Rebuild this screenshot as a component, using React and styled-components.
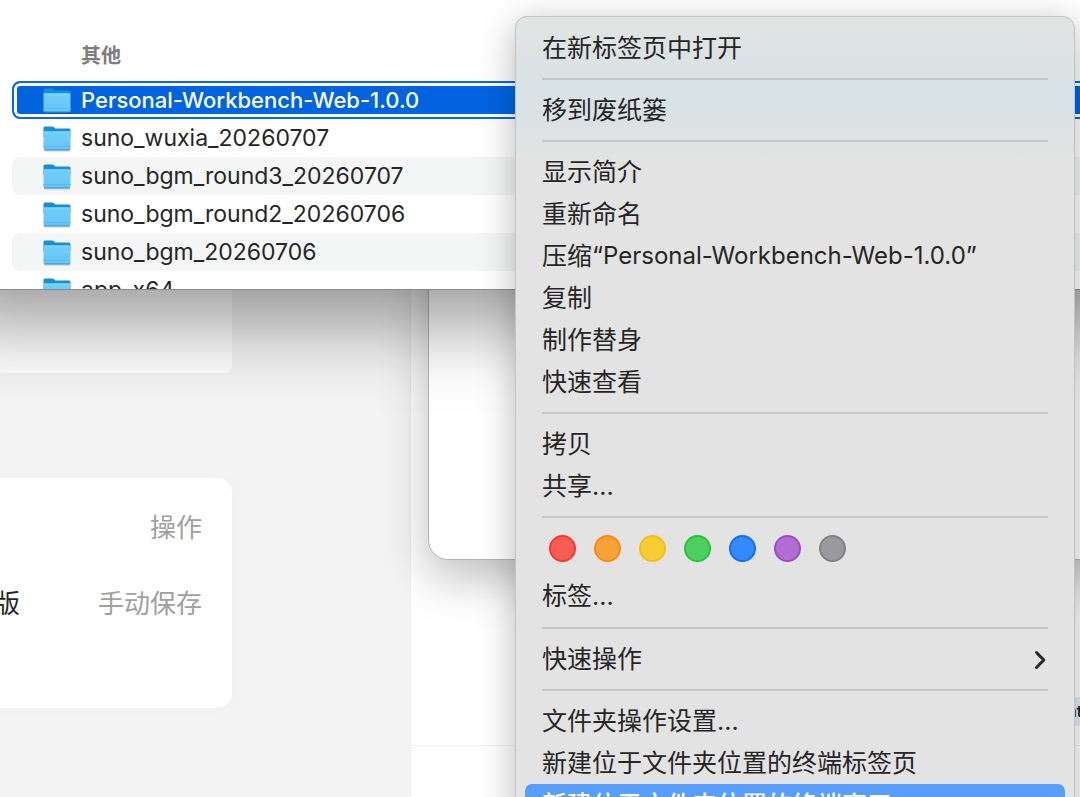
import React from "react";
import styled, { createGlobalStyle, css } from "styled-components";

const GlobalStyle = createGlobalStyle`
  * {
    box-sizing: border-box;
  }
  body {
    margin: 0;
    background-color: #f4f4f4;
    color: #262626;
    font-family: Inter, "Noto Sans CJK SC", sans-serif;
  }
  button {
    border: none;
    background: none;
    padding: 0;
    margin: 0;
    font: inherit;
    color: inherit;
    text-align: left;
  }
`;

const DesktopStyles = styled.main`
  position: relative;
  height: 100vh;
  overflow: hidden;
`;

/* web page behind the windows */
const PageStyles = styled.div`
  display: grid;
  grid-template-columns: 411px 1fr;
  min-height: 100vh;
`;

const Sidebar = styled.aside`
  display: flex;
  flex-direction: column;
  gap: 105px;
  padding-right: 178px;
  border-right: 1px solid #f0f0f0;
  background-color: #f4f4f4;
`;

const EmptyCard = styled.section`
  height: 373px;
  border-radius: 0 0 8px 0;
  background-color: #fff;
`;

const TableCard = styled.section`
  margin-left: -40px;
  padding: 10px 30px 68px 34px;
  border-radius: 15px;
  background-color: #fff;
  box-shadow: 0 0 20px rgba(0, 0, 0, 0.03);
`;

const SaveTable = styled.table`
  width: 100%;
  border-collapse: collapse;
  font-family: "Noto Sans CJK SC", sans-serif;
  font-size: 26px;
  line-height: 38px;
  th,
  td {
    height: 76px;
    padding: 0;
    font-weight: 400;
    text-align: left;
  }
  th:last-child,
  td:last-child {
    color: #a0a0a0;
    text-align: right;
  }
`;

const Content = styled.section`
  display: flex;
  flex-direction: column;
  background-color: #fff;
`;

const ContentHead = styled.div`
  display: flex;
  align-items: flex-end;
  justify-content: flex-end;
  height: 746px;
  padding-bottom: 19px;
  border-bottom: 1px solid #f0f0f0;
`;

const Tag = styled.span`
  margin-right: -2px;
  background-color: #e3e9f5;
  font-size: 15px;
  font-weight: 600;
  line-height: 29px;
  white-space: nowrap;
`;

/* windows */
const BackWindow = styled.section`
  position: absolute;
  top: -40px;
  left: 428px;
  right: -60px;
  height: 600px;
  border: 1px solid #b4b4b4;
  border-radius: 20px;
  background-color: #fff;
  box-shadow: 0 18px 48px rgba(0, 0, 0, 0.26);
`;

const FinderWindow = styled.section`
  position: absolute;
  top: 0;
  left: 0;
  right: 0;
  height: 290px;
  overflow: hidden;
  border-bottom: 1px solid #8a8a8a;
  background-color: #fff;
`;

const FinderShadow = styled.div`
  position: absolute;
  top: -60px;
  left: -60px;
  right: -60px;
  height: 350px;
  box-shadow: 0 36px 72px rgba(0, 0, 0, 0.38);
`;

const GroupTitle = styled.h2`
  margin: 0;
  padding: 41px 0 10px 81px;
  color: #7d7d7d;
  font-size: 20px;
  font-weight: 700;
  line-height: 30px;
`;

const FileList = styled.ul`
  margin: 0 -12px 0 12px;
  padding: 0;
  list-style: none;
`;

const FileRow = styled.li`
  display: flex;
  align-items: center;
  gap: 10px;
  height: 38px;
  padding-left: 31px;
  border-radius: 8px;
  background-color: ${(props) => (props.$striped ? "#f4f5f5" : "#fff")};
  font-size: 23px;
  line-height: 38px;
  svg {
    flex: none;
  }
  ${(props) =>
    props.$selected &&
    css`
      padding-left: 29px;
      border: 2px solid #0a68e0;
      background-color: #0064e1;
      box-shadow: inset 0 0 0 3px #fff;
      color: #fff;
      font-size: 22px;
      font-weight: 500;
    `}
`;

/* context menu */
const MenuStyles = styled.div`
  position: absolute;
  top: 16px;
  left: 515px;
  width: 560px;
  padding: 10px 9px;
  border: 1px solid #c2c4c4;
  border-radius: 12px;
  background: #e3e3e3
    linear-gradient(#e2e4e3 0, #d9e2e4 62px, #d9e2e4 90px, #e3e3e3 146px);
  box-shadow: 0 8px 36px rgba(0, 0, 0, 0.28);
`;

const MenuGroup = styled.div`
  display: flex;
  flex-direction: column;
  & + & {
    margin-top: 9px;
  }
  & + &::before {
    content: "";
    height: 2px;
    margin: 0 17px 9px;
    background-color: rgba(0, 0, 0, 0.12);
  }
`;

const MenuItem = styled.button`
  display: flex;
  align-items: center;
  height: 42px;
  padding: 0 17px;
  border-radius: 7px;
  font-size: 25px;
  line-height: 42px;
  white-space: nowrap;
  svg {
    margin-left: auto;
  }
  ${(props) =>
    props.$active &&
    css`
      background-color: #579efe;
      color: #fff;
      font-weight: 500;
    `}
`;

const FileName = styled.span`
  font-size: 24px;
`;

const TagRow = styled.div`
  display: flex;
  align-items: center;
  gap: 18px;
  height: 42px;
  margin-bottom: 6px;
  padding: 0 24px;
`;

const TagsGroup = styled(MenuGroup)`
  padding-bottom: 1px;
`;

const TagDot = styled.button`
  width: 27px;
  height: 27px;
  border: 2px solid ${(props) => props.$ring};
  border-radius: 50%;
  background-color: ${(props) => props.$fill};
`;

const files = [
  "Personal-Workbench-Web-1.0.0",
  "suno_wuxia_20260707",
  "suno_bgm_round3_20260707",
  "suno_bgm_round2_20260706",
  "suno_bgm_20260706",
  "app_x64",
];

const colors = [
  { name: "红色", fill: "#f95c53", ring: "#f8382f" },
  { name: "橙色", fill: "#f8a236", ring: "#f58b12" },
  { name: "黄色", fill: "#f6ce34", ring: "#f3c010" },
  { name: "绿色", fill: "#4dd05f", ring: "#25c23b" },
  { name: "蓝色", fill: "#348afb", ring: "#0d70f5" },
  { name: "紫色", fill: "#b16dd3", ring: "#9f4bc8" },
  { name: "灰色", fill: "#9a999e", ring: "#828186" },
];

const FolderIcon = () => (
  <svg width="28" height="27" viewBox="0 0 28 27" aria-hidden="true">
    <path
      d="M1 24.5h26v1.2q0 .8-1 .8H2q-1 0-1-.8z"
      fill="#000"
      opacity="0.22"
    />
    <path
      d="M.5 3q0-1.500 1.500-1.500h7q1 0 1.700.6l1 .8q.6.500 1.500.500H26q1.500 0 1.500 1.500V12H.5z"
      fill="#1590d2"
    />
    <path
      d="M.5 7.500q0-1.200 1.200-1.200h24.600q1.200 0 1.200 1.200v16q0 1.700-1.500 1.700H2q-1.500 0-1.500-1.700z"
      fill="url(#folderFront)"
    />
    <path d="M.5 21.500h27" stroke="#5cb9ea" strokeWidth="1" />
    <path d="M1.200 24.800h25.600" stroke="#3d9fd4" strokeWidth="1" />
    <defs>
      <linearGradient id="folderFront" x1="0" y1="0" x2="0" y2="1">
        <stop offset="0" stopColor="#86d6fb" />
        <stop offset="0.150" stopColor="#70cdfb" />
        <stop offset="1" stopColor="#66c4f5" />
      </linearGradient>
    </defs>
  </svg>
);

const ChevronIcon = () => (
  <svg width="14" height="20" viewBox="0 0 14 20" aria-hidden="true">
    <path
      d="M2.500 3.500 9.800 11l-7.300 7.500"
      fill="none"
      stroke="#262626"
      strokeWidth="3"
      strokeLinecap="round"
      strokeLinejoin="round"
    />
  </svg>
);

const Page = () => (
  <PageStyles>
    <Sidebar>
      <EmptyCard />
      <TableCard>
        <SaveTable>
          <thead>
            <tr>
              <th></th>
              <th>操作</th>
            </tr>
          </thead>
          <tbody>
            <tr>
              <td>版</td>
              <td>
                <button type="button">手动保存</button>
              </td>
            </tr>
          </tbody>
        </SaveTable>
      </TableCard>
    </Sidebar>
    <Content>
      <ContentHead>
        <Tag>nt</Tag>
      </ContentHead>
    </Content>
  </PageStyles>
);

const Finder = () => (
  <FinderWindow>
    <GroupTitle>其他</GroupTitle>
    <FileList>
      {files.map((file, index) => (
        <FileRow
          key={file}
          $selected={index === 0}
          $striped={index > 0 && index % 2 === 0}
        >
          <FolderIcon />
          {file}
        </FileRow>
      ))}
    </FileList>
  </FinderWindow>
);

const ContextMenu = () => (
  <MenuStyles role="menu">
    <MenuGroup>
      <MenuItem role="menuitem">在新标签页中打开</MenuItem>
    </MenuGroup>
    <MenuGroup>
      <MenuItem role="menuitem">移到废纸篓</MenuItem>
    </MenuGroup>
    <MenuGroup>
      <MenuItem role="menuitem">显示简介</MenuItem>
      <MenuItem role="menuitem">重新命名</MenuItem>
      <MenuItem role="menuitem">
        压缩“<FileName>{files[0]}</FileName>”
      </MenuItem>
      <MenuItem role="menuitem">复制</MenuItem>
      <MenuItem role="menuitem">制作替身</MenuItem>
      <MenuItem role="menuitem">快速查看</MenuItem>
    </MenuGroup>
    <MenuGroup>
      <MenuItem role="menuitem">拷贝</MenuItem>
      <MenuItem role="menuitem">共享...</MenuItem>
    </MenuGroup>
    <TagsGroup>
      <TagRow>
        {colors.map((color) => (
          <TagDot
            key={color.name}
            aria-label={color.name}
            $fill={color.fill}
            $ring={color.ring}
          />
        ))}
      </TagRow>
      <MenuItem role="menuitem">标签...</MenuItem>
    </TagsGroup>
    <MenuGroup>
      <MenuItem role="menuitem">
        快速操作
        <ChevronIcon />
      </MenuItem>
    </MenuGroup>
    <MenuGroup>
      <MenuItem role="menuitem">文件夹操作设置...</MenuItem>
      <MenuItem role="menuitem">新建位于文件夹位置的终端标签页</MenuItem>
      <MenuItem role="menuitem" $active>
        新建位于文件夹位置的终端窗口
      </MenuItem>
    </MenuGroup>
  </MenuStyles>
);

const App = () => {
  return (
    <DesktopStyles>
      <GlobalStyle />
      <Page />
      <BackWindow />
      <FinderShadow />
      <Finder />
      <ContextMenu />
    </DesktopStyles>
  );
};

export default App;
